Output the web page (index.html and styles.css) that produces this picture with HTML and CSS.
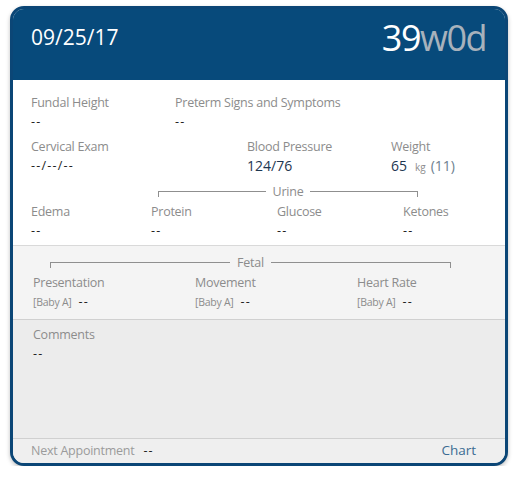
FILE: index.html
```html
<!DOCTYPE html>
<html>
<head>
<meta charset="utf-8">
<link rel="stylesheet" href="styles.css">
</head>
<body>
<div class="card">
  <div class="header">
    <div class="date">09/25/17</div>
    <div class="ga"><span class="ga-num">39</span><span class="ga-unit">w</span><span class="ga-unit">0</span><span class="ga-unit">d</span></div>
  </div>
  <div class="vitals">
    <div class="row r1">
      <div class="field w144"><div class="label">Fundal Height</div><div class="value dash">--</div></div>
      <div class="field"><div class="label">Preterm Signs and Symptoms</div><div class="value dash">--</div></div>
    </div>
    <div class="row r2">
      <div class="field w216"><div class="label">Cervical Exam</div><div class="value dash">--/--/--</div></div>
      <div class="field w144"><div class="label">Blood Pressure</div><div class="value reading">124/76</div></div>
      <div class="field"><div class="label">Weight</div><div class="value reading">65<span class="kg">kg</span><span class="paren">(11)</span></div></div>
    </div>
    <div class="bracket urine"><span class="blabel">Urine</span></div>
    <div class="row r3">
      <div class="field w120"><div class="label">Edema</div><div class="value dash">--</div></div>
      <div class="field w126"><div class="label">Protein</div><div class="value dash">--</div></div>
      <div class="field w126"><div class="label">Glucose</div><div class="value dash">--</div></div>
      <div class="field"><div class="label">Ketones</div><div class="value dash">--</div></div>
    </div>
  </div>
  <div class="fetal">
    <div class="bracket fetalb"><span class="blabel">Fetal</span></div>
    <div class="row r4">
      <div class="field w162"><div class="label">Presentation</div><div class="value"><span class="baby">[Baby A]</span><span class="dash">--</span></div></div>
      <div class="field w162"><div class="label">Movement</div><div class="value"><span class="baby">[Baby A]</span><span class="dash">--</span></div></div>
      <div class="field"><div class="label">Heart Rate</div><div class="value"><span class="baby">[Baby A]</span><span class="dash">--</span></div></div>
    </div>
  </div>
  <div class="comments">
    <div class="label">Comments</div>
    <div class="value dash">--</div>
  </div>
  <div class="footer">
    <div class="next"><span class="label">Next Appointment</span><span class="dash">--</span></div>
    <div class="chart">Chart</div>
  </div>
</div>
</body>
</html>
```
FILE: styles.css
```css
* { box-sizing: border-box; }
html, body { margin: 0; padding: 0; background: #fff; }
body {
  font-family: "Open Sans", "Noto Sans", sans-serif;
  font-size: 12.5px;
  letter-spacing: -0.25px;
  padding: 6px 0 0 10px;
}
.card {
  width: 498px;
  height: 460px;
  border: 3px solid #0b4676;
  border-radius: 14px;
  overflow: hidden;
  display: flex;
  flex-direction: column;
  background: #ececec;
  box-shadow: 0 2px 4px rgba(0,0,0,0.25);
}
.header {
  height: 71px;
  background: #074a7b;
  display: flex;
  justify-content: space-between;
  align-items: flex-start;
  padding: 0 19px 0 18px;
  flex-shrink: 0;
}
.date {
  color: #fff;
  font-size: 21px;
  letter-spacing: 0;
  margin-top: 14px;
}
.ga {
  font-size: 36px;
  letter-spacing: -1.5px;
  margin-top: 7px;
  line-height: 1.2;
}
.ga-num { color: #fff; }
.ga-unit { color: #a7b2bc; }
.vitals {
  background: #fff;
  padding: 13px 18px 5px 18px;
}
.row { display: flex; }
.r1, .r2 { margin-bottom: 6px; }
.r3 { margin-top: 1px; }
.r4 { margin-top: 1px; }
.field { flex-shrink: 0; }
.w144 { width: 144px; }
.w216 { width: 216px; }
.w120 { width: 120px; }
.w126 { width: 126px; }
.w162 { width: 162px; }
.label { color: #8c8c8c; line-height: 19px; }
.value { line-height: 19px; height: 19px; white-space: nowrap; }
.dash { color: #222; letter-spacing: 1.2px; }
.reading { color: #1d3650; font-size: 14px; letter-spacing: 0; }
.kg { color: #8c8c8c; font-size: 10px; margin-left: 8px; }
.paren { color: #6d7f8f; font-size: 14px; margin-left: 5px; }
.baby { color: #8c8c8c; font-size: 10.5px; margin-right: 7px; }
.bracket {
  position: relative;
  height: 19px;
  display: flex;
  justify-content: center;
  align-items: center;
}
.bracket::before {
  content: "";
  position: absolute;
  left: 0; right: 0;
  top: 9px;
  height: 5px;
  border: 1px solid #8f8f8f;
  border-bottom: none;
}
.blabel {
  position: relative;
  padding: 0 7px;
  color: #8c8c8c;
  line-height: 19px;
}
.urine { margin: 7px 0 0 127px; width: 260px; }
.urine .blabel { background: #fff; }
.fetal {
  background: #f4f4f4;
  border-top: 1px solid #d9d9d9;
  border-bottom: 1px solid #d0d0d0;
  padding: 7px 18px 8px 20px;
}
.fetalb { margin-left: 17px; width: 401px; }
.fetalb .blabel { background: #f4f4f4; }
.comments {
  flex: 1;
  background: #ececec;
  padding: 5px 20px;
}
.footer {
  height: 25px;
  border-top: 1px solid #d0d0d0;
  background: #efefef;
  display: flex;
  justify-content: space-between;
  align-items: center;
  padding: 0 29px 2px 18px;
}
.next .label { color: #9b9b9b; }
.next .dash { margin-left: 9px; }
.chart { color: #3b6c93; font-size: 13.5px; letter-spacing: 0; }
```
